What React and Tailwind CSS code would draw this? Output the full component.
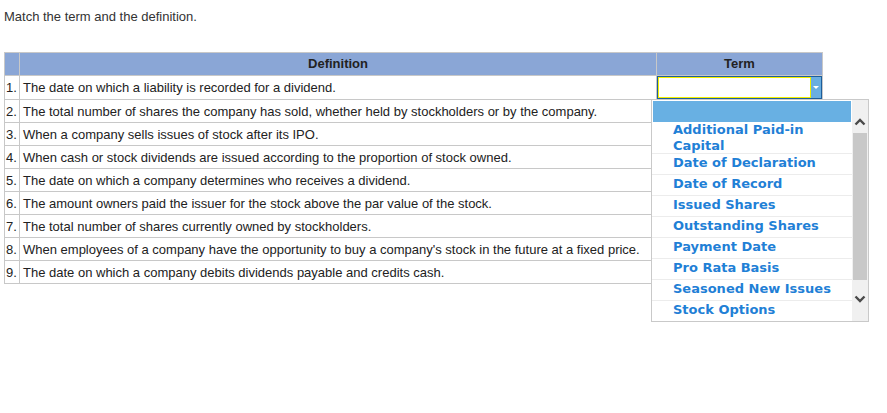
const definitions = [
  'The date on which a liability is recorded for a dividend.',
  'The total number of shares the company has sold, whether held by stockholders or by the company.',
  'When a company sells issues of stock after its IPO.',
  'When cash or stock dividends are issued according to the proportion of stock owned.',
  'The date on which a company determines who receives a dividend.',
  'The amount owners paid the issuer for the stock above the par value of the stock.',
  'The total number of shares currently owned by stockholders.',
  "When employees of a company have the opportunity to buy a company's stock in the future at a fixed price.",
  'The date on which a company debits dividends payable and credits cash.',
]

const terms = [
  'Date of Declaration',
  'Date of Record',
  'Issued Shares',
  'Outstanding Shares',
  'Payment Date',
  'Pro Rata Basis',
  'Seasoned New Issues',
  'Stock Options',
]

function Chevron({ up }) {
  return (
    <svg width="12" height="8" viewBox="0 0 12 8">
      <polyline
        points={up ? '1.5,6.5 6,2 10.5,6.5' : '1.5,1.5 6,6 10.5,1.5'}
        fill="none"
        stroke="#4a4a4a"
        strokeWidth="2.4"
      />
    </svg>
  )
}

function TermSelect() {
  return (
    <div className="flex h-[23px] w-full border border-[#1d5e9b]">
      <div className="flex-1 border border-[#f3f000] bg-white" />
      <div className="flex w-[10px] items-center justify-center bg-[#6aaee0]">
        <div className="h-0 w-0 border-x-[3px] border-t-[3px] border-x-transparent border-t-white" />
      </div>
    </div>
  )
}

function TermList() {
  return (
    <div className="absolute left-[651px] top-[99px] flex h-[223px] w-[218px] border border-[#c9c9c9] bg-white">
      <div className="flex-1" style={{ fontFamily: '"DejaVu Sans", Verdana, sans-serif' }}>
        <div className="mx-px mt-px h-[21px] bg-[#68b0e3]" />
        <div className="h-[32px] border-b border-[#ececec] pl-[21px] text-[13px] font-bold leading-[16px] text-[#1f80d6]">
          Additional Paid-in<br />Capital
        </div>
        {terms.map((t) => (
          <div
            key={t}
            className="h-[21px] border-b border-[#ececec] pl-[21px] pt-px text-[13px] font-bold leading-[16px] text-[#1f80d6] last:border-b-0"
          >
            {t}
          </div>
        ))}
      </div>
      <div className="flex w-[16px] flex-col bg-[#f0f0f0]">
        <div className="mt-[15px] flex h-[14px] items-center justify-center">
          <Chevron up />
        </div>
        <div className="mx-px mt-[4px] h-[147px] bg-[#c8c8c8]" />
        <div className="mt-[12px] flex h-[14px] items-center justify-center">
          <Chevron />
        </div>
      </div>
    </div>
  )
}

export default function App() {
  return (
    <div
      className="relative h-[413px] w-[887px] bg-white px-[4px] pt-[9px] text-[13px] text-[#333]"
      style={{ fontFamily: '"Liberation Sans", Arial, sans-serif' }}
    >
      <p className="leading-[15px]">Match the term and the definition.</p>

      <table className="mt-[28px] w-[818px] table-fixed border-collapse">
        <colgroup>
          <col className="w-[15px]" />
          <col className="w-[637px]" />
          <col className="w-[166px]" />
        </colgroup>
        <thead>
          <tr className="h-[23px] bg-[#8aa6d6] text-[#222]">
            <th className="border border-[#c8c8c8]" />
            <th className="border border-[#c8c8c8] font-bold">Definition</th>
            <th className="border border-[#c8c8c8] font-bold">Term</th>
          </tr>
        </thead>
        <tbody>
          {definitions.map((d, i) => (
            <tr key={i} className="h-[23px] text-[#222]">
              <td className="border border-[#c8c8c8] pl-[1px] leading-[15px]">{i + 1}.</td>
              <td className="border border-[#c8c8c8] pl-[3px] leading-[15px]">{d}</td>
              <td className="border border-[#c8c8c8] p-0">
                {i === 0 && <TermSelect />}
              </td>
            </tr>
          ))}
        </tbody>
      </table>

      <TermList />
    </div>
  )
}
